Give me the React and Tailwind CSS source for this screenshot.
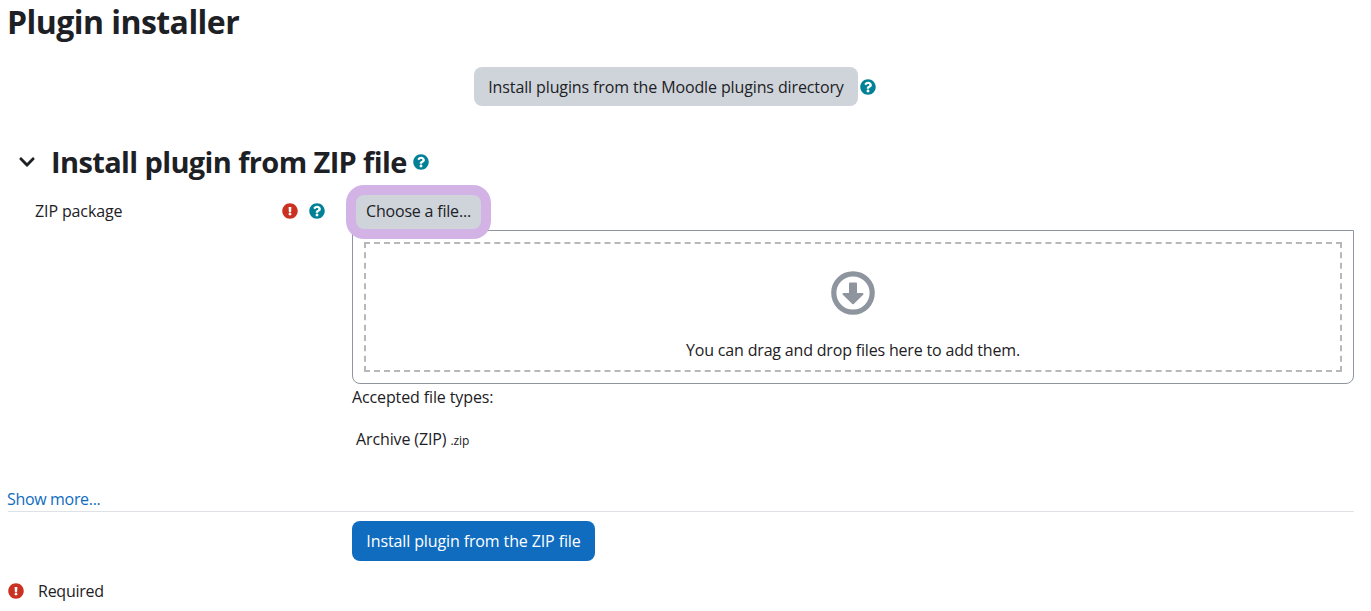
import React from "react";
import { FaQuestionCircle, FaExclamationCircle, FaChevronDown } from "react-icons/fa";

const font = "font-['Open_Sans',sans-serif]";

function DropIcon() {
  return (
    <svg width="44" height="44" viewBox="0 0 44 44" className="mt-[27px] shrink-0 text-[#8f959e]">
      <circle cx="22" cy="22" r="19.2" fill="none" stroke="currentColor" strokeWidth="5.2" />
      <path d="M18 12.5a1 1 0 0 1 1-1h6a1 1 0 0 1 1 1V22h5.5a1 1 0 0 1 .7 1.7L22.7 33a1 1 0 0 1-1.4 0l-9.5-9.3a1 1 0 0 1 .7-1.7H18z" fill="currentColor" />
    </svg>
  );
}

export default function App() {
  return (
    <div className={`${font} bg-white text-[#1d2125] text-[16px] h-[611px] overflow-hidden pl-2 pr-[17px] tracking-[-0.12px]`}>
      <h1 className="text-[32px] leading-[44px] font-bold tracking-[-0.55px] -ml-px">Plugin installer</h1>
      <div className="flex justify-center items-center mt-[23px] h-[39px] pr-[12px]">
        <button className="bg-[#ced4da] rounded-lg h-[39px] w-[384px] text-center">Install plugins from the Moodle plugins directory</button>
        <FaQuestionCircle className="ml-[2px] text-[16px] text-[#008196]" />
      </div>
      <div className="flex items-center mt-[37px] h-[40px]">
        <FaChevronDown className="ml-[10px] text-[18px] mb-[2px]" />
        <h2 className="ml-[15px] mb-[2px] text-[29px] leading-[40px] font-bold tracking-[-0.62px]">Install plugin from ZIP file</h2>
        <FaQuestionCircle className="ml-[6px] mb-[2px] text-[16px] text-[#008196]" />
      </div>
      <div className="flex mt-[3px]">
        <div className="w-[344px] shrink-0 flex pt-[14px] pl-[27px] h-[40px] items-start">
          <span className="leading-[22px]">ZIP package</span>
          <span className="ml-auto mr-[27px] flex gap-[11px] mt-[3px]">
            <FaExclamationCircle className="text-[16px] text-[#ca3120]" />
            <FaQuestionCircle className="text-[16px] text-[#008196]" />
          </span>
        </div>
        <div className="flex-1 min-w-0">
          <div className="pl-1 h-[44px] flex items-end pb-[1px]">
            <button className="h-[34px] w-[125px] bg-[#ced4da] rounded-lg ring-[10px] ring-[#d3b3e5] relative z-10 pb-[2px] tracking-[-0.2px]">Choose a file...</button>
          </div>
          <div className="border border-[#8f959e] rounded-b-lg h-[154px] p-[11px]">
            <div className="h-full border-2 border-dashed border-[#b8b8b8] flex flex-col items-center">
              <DropIcon />
              <div className="mt-[24px] leading-[22px] tracking-[-0.18px]">You can drag and drop files here to add them.</div>
            </div>
          </div>
          <div className="mt-[2px] leading-[22px]">Accepted file types:</div>
          <div className="mt-[20px] ml-1 leading-[22px]">Archive (ZIP) <span className="text-[12px]">.zip</span></div>
        </div>
      </div>
      <div className="mt-[36px] text-[#0f6cbf] leading-[22px] tracking-[-0.33px] -ml-px">Show more...</div>
      <div className="border-t border-[#dee2e6] mt-[1px]" />
      <div className="pl-[344px] mt-[9px]">
        <button className="bg-[#0f6cbf] text-white rounded-lg h-[40px] w-[243px]">Install plugin from the ZIP file</button>
      </div>
      <div className="flex items-center mt-[19px] h-[22px]">
        <FaExclamationCircle className="text-[16px] text-[#ca3120]" />
        <span className="ml-[14px] tracking-[-0.25px]">Required</span>
      </div>
    </div>
  );
}
